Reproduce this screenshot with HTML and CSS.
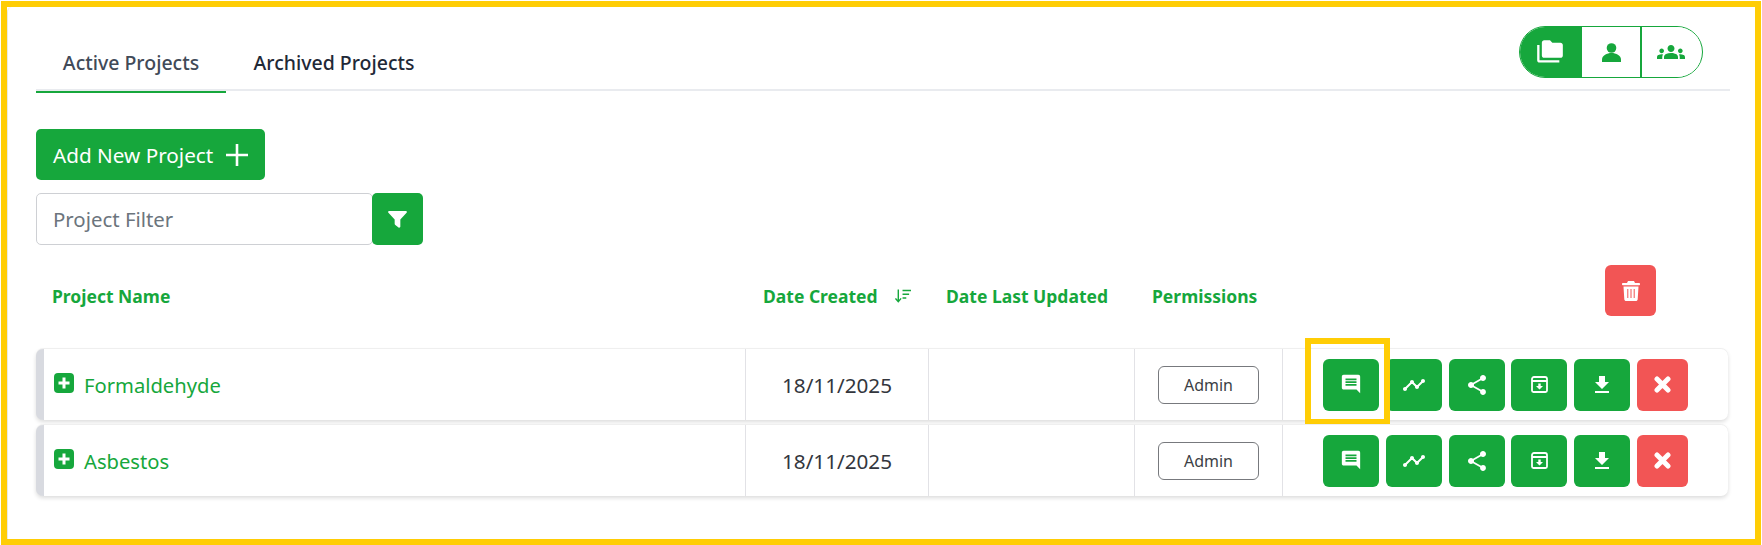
FILE: index.html
```html
<!DOCTYPE html>
<html lang="en">
<head>
<meta charset="utf-8">
<title>Projects</title>
<link rel="stylesheet" href="styles.css">
</head>
<body>
<div class="frame">
  <main class="card">
    <nav class="tabs">
      <a class="tab tab-active">Active Projects</a>
      <a class="tab">Archived Projects</a>
      <div class="toggle">
        <button class="toggle-item toggle-on"><svg class="ic-folder" viewBox="0 0 24 24"><path d="M3 19h17v2H3c-1.1 0-2-.9-2-2V6h2v13zM23 6v9c0 1.1-.9 2-2 2H7c-1.1 0-2-.9-2-2l.01-11C5.01 2.9 5.9 2 7 2h5l2 2h7c1.1 0 2 .9 2 2z"/></svg></button>
        <button class="toggle-item"><svg class="ic-person" viewBox="0 0 19 19"><circle cx="9.500" cy="5" r="4.800"/><path d="M0 19v-2.500C0 12.500 5 10 9.500 10S19 12.500 19 16.500V19z"/></svg></button>
        <button class="toggle-item"><svg class="ic-groups" viewBox="0 0 24 24"><path d="M12 12.750c1.630 0 3.070.39 4.240.9 1.080.48 1.760 1.560 1.760 2.730V18H6v-1.610c0-1.180.68-2.260 1.760-2.730 1.170-.52 2.610-.91 4.240-.91zM4 13c1.100 0 2-.9 2-2s-.9-2-2-2-2 .9-2 2 .9 2 2 2zm1.130 1.100c-.37-.06-.74-.1-1.130-.1-.99 0-1.930.21-2.780.58C.48 14.900 0 15.620 0 16.430V18h4.500v-1.610c0-.83.23-1.610.63-2.290zM20 13c1.100 0 2-.9 2-2s-.9-2-2-2-2 .9-2 2 .9 2 2 2zm4 3.430c0-.81-.48-1.530-1.220-1.850-.85-.37-1.790-.58-2.780-.58-.39 0-.76.04-1.130.1.4.68.63 1.460.63 2.290V18H24v-1.570zM12 6c1.660 0 3 1.340 3 3s-1.340 3-3 3-3-1.340-3-3 1.340-3 3-3z"/></svg></button>
      </div>
    </nav>

    <button class="add-btn">Add New Project<svg class="ic-plus" viewBox="0 0 22 22"><path d="M11 0v22M0 11h22"/></svg></button>

    <div class="filter">
      <input class="filter-input" type="text" placeholder="Project Filter">
      <button class="filter-btn"><svg class="ic-filter" viewBox="0 0 20 18"><path d="M1.200 0h17.600c1 0 1.500 1.200.8 1.900L13 9v7.500c0 1-1.100 1.500-1.900.9l-3.400-2.600c-.4-.3-.7-.7-.7-1.200V9L.4 1.900C-.3 1.200.2 0 1.200 0z"/></svg></button>
    </div>

    <div class="grid head">
      <div class="hcell hname">Project Name</div>
      <div class="hcell">Date Created<svg class="ic-sort" viewBox="0 0 17 14"><path d="M3.500 0v12M.5 9.500l3 3.500 3-3.500M8 1.200h9M8 5.200h7M8 9.200h4"/></svg></div>
      <div class="hcell">Date Last Updated</div>
      <div class="hcell">Permissions</div>
      <div class="hactions">
        <button class="act danger del"><svg class="ic-trash" viewBox="0 0 18 20"><path d="M6 0h6l1 2h4.200c.4 0 .8.400.8.800v.700c0 .4-.4.800-.8.800H.8c-.4 0-.8-.4-.8-.8v-.700c0-.4.400-.8.800-.8H5zM1.500 5.500h15l-.8 12.700c-.1 1-.9 1.800-1.900 1.800H4.200c-1 0-1.800-.8-1.900-1.800z"/><path class="trash-bars" d="M5.800 8v9M9 8v9M12.200 8v9"/></svg></button>
      </div>
    </div>

    <section class="grid row">
      <div class="cell name"><svg class="ic-expand" viewBox="0 0 20 20"><rect width="20" height="20" rx="4"/><path d="M10 4.500v11M4.500 10h11"/></svg><a class="pname">Formaldehyde</a></div>
      <div class="cell center">18/11/2025</div>
      <div class="cell"></div>
      <div class="cell center"><span class="badge">Admin</span></div>
      <div class="cell actions">
        <button class="act"><svg class="i22" viewBox="0 0 24 24"><path d="M21.990 4c0-1.100-.89-2-1.990-2H4c-1.100 0-2 .9-2 2v12c0 1.100.9 2 2 2h14l4 4-.01-18zM18 14H6v-2h12v2zm0-3H6V9h12v2zm0-3H6V6h12v2z"/></svg></button>
        <button class="act"><svg class="i24" viewBox="0 0 24 24"><path d="M23 8c0 1.100-.9 2-2 2-.18 0-.35-.02-.51-.07l-3.560 3.550c.05.16.07.34.07.52 0 1.100-.9 2-2 2s-2-.9-2-2c0-.18.02-.36.07-.52l-2.550-2.550c-.16.05-.34.07-.52.07s-.36-.02-.52-.07l-4.550 4.560c.05.16.07.33.07.51 0 1.100-.9 2-2 2s-2-.9-2-2 .9-2 2-2c.18 0 .35.02.51.07l4.560-4.550C8.020 9.360 8 9.180 8 9c0-1.100.9-2 2-2s2 .9 2 2c0 .18-.02.36-.07.52l2.550 2.550c.16-.05.34-.07.52-.07s.36.02.52.07l3.550-3.560C19.020 8.350 19 8.180 19 8c0-1.100.9-2 2-2s2 .9 2 2z"/></svg></button>
        <button class="act"><svg class="i24" viewBox="0 0 24 24"><path d="M18 16.080c-.76 0-1.440.3-1.960.77L8.910 12.700c.05-.23.09-.46.09-.7s-.04-.47-.09-.7l7.050-4.110c.54.5 1.250.81 2.040.81 1.660 0 3-1.340 3-3s-1.340-3-3-3-3 1.340-3 3c0 .24.04.47.09.7L8.040 9.810C7.500 9.310 6.790 9 6 9c-1.660 0-3 1.340-3 3s1.340 3 3 3c.79 0 1.500-.31 2.040-.81l7.120 4.160c-.05.21-.08.43-.08.65 0 1.610 1.310 2.920 2.920 2.920s2.920-1.310 2.920-2.920-1.310-2.920-2.920-2.920z"/></svg></button>
        <button class="act"><svg class="i17" viewBox="0 0 17 17"><path class="ol" d="M1 5v9.500A1.500 1.500 0 0 0 2.500 16h12a1.500 1.500 0 0 0 1.500-1.500V5M1 5V3A2 2 0 0 1 3 1h11a2 2 0 0 1 2 2v2M1 5h15"/><path d="M7.300 7.500h2.400v2.600h2.300l-3.500 3.400-3.500-3.400h2.300z"/></svg></button>
        <button class="act"><svg class="i24" viewBox="0 0 24 24"><path d="M19 9h-4V3H9v6H5l7 7 7-7zM5 18v2h14v-2H5z"/></svg></button>
        <button class="act danger"><svg class="i17 x" viewBox="0 0 17 17"><path d="M3 3l11 11M14 3L3 14"/></svg></button>
      </div>
      <div class="highlight"></div>
    </section>

    <section class="grid row">
      <div class="cell name"><svg class="ic-expand" viewBox="0 0 20 20"><rect width="20" height="20" rx="4"/><path d="M10 4.500v11M4.500 10h11"/></svg><a class="pname">Asbestos</a></div>
      <div class="cell center">18/11/2025</div>
      <div class="cell"></div>
      <div class="cell center"><span class="badge">Admin</span></div>
      <div class="cell actions">
        <button class="act"><svg class="i22" viewBox="0 0 24 24"><path d="M21.990 4c0-1.100-.89-2-1.990-2H4c-1.100 0-2 .9-2 2v12c0 1.100.9 2 2 2h14l4 4-.01-18zM18 14H6v-2h12v2zm0-3H6V9h12v2zm0-3H6V6h12v2z"/></svg></button>
        <button class="act"><svg class="i24" viewBox="0 0 24 24"><path d="M23 8c0 1.100-.9 2-2 2-.18 0-.35-.02-.51-.07l-3.560 3.550c.05.16.07.34.07.52 0 1.100-.9 2-2 2s-2-.9-2-2c0-.18.02-.36.07-.52l-2.550-2.550c-.16.05-.34.07-.52.07s-.36-.02-.52-.07l-4.550 4.560c.05.16.07.33.07.51 0 1.100-.9 2-2 2s-2-.9-2-2 .9-2 2-2c.18 0 .35.02.51.07l4.560-4.550C8.020 9.360 8 9.180 8 9c0-1.100.9-2 2-2s2 .9 2 2c0 .18-.02.36-.07.52l2.550 2.550c.16-.05.34-.07.52-.07s.36.02.52.07l3.550-3.560C19.020 8.350 19 8.180 19 8c0-1.100.9-2 2-2s2 .9 2 2z"/></svg></button>
        <button class="act"><svg class="i24" viewBox="0 0 24 24"><path d="M18 16.080c-.76 0-1.440.3-1.960.77L8.910 12.700c.05-.23.09-.46.09-.7s-.04-.47-.09-.7l7.050-4.110c.54.5 1.250.81 2.040.81 1.660 0 3-1.340 3-3s-1.340-3-3-3-3 1.340-3 3c0 .24.04.47.09.7L8.040 9.810C7.500 9.310 6.790 9 6 9c-1.660 0-3 1.340-3 3s1.340 3 3 3c.79 0 1.500-.31 2.040-.81l7.120 4.160c-.05.21-.08.43-.08.65 0 1.610 1.310 2.920 2.920 2.920s2.920-1.310 2.920-2.920-1.310-2.920-2.920-2.920z"/></svg></button>
        <button class="act"><svg class="i17" viewBox="0 0 17 17"><path class="ol" d="M1 5v9.500A1.500 1.500 0 0 0 2.500 16h12a1.500 1.500 0 0 0 1.500-1.500V5M1 5V3A2 2 0 0 1 3 1h11a2 2 0 0 1 2 2v2M1 5h15"/><path d="M7.300 7.500h2.400v2.600h2.300l-3.500 3.400-3.500-3.400h2.300z"/></svg></button>
        <button class="act"><svg class="i24" viewBox="0 0 24 24"><path d="M19 9h-4V3H9v6H5l7 7 7-7zM5 18v2h14v-2H5z"/></svg></button>
        <button class="act danger"><svg class="i17 x" viewBox="0 0 17 17"><path d="M3 3l11 11M14 3L3 14"/></svg></button>
      </div>
    </section>
  </main>
</div>
</body>
</html>
```
FILE: styles.css
```css
* { box-sizing: border-box; }
html, body { margin: 0; padding: 0; background: #fff; }
body { padding: 1px 1px 0; font-family: "Noto Sans", "Open Sans", sans-serif; overflow: hidden; }
button { font-family: inherit; border: 0; padding: 0; cursor: pointer; }
svg { display: block; fill: currentColor; }

.frame { height: 544px; border: 6px solid #ffcd05; background: #fff; }
.card { height: 100%; padding: 0 27px 0 28px; border-left: 1px solid #e8e8e8; border-radius: 5px 0 0 0; }

.tabs { display: flex; align-items: flex-end; height: 84px; margin-right: -2px; border-bottom: 2px solid #e9ebef; }
.tab { width: 190px; height: 55px; margin-bottom: -4px; padding-top: 11px; text-align: center; font-size: 19.500px; line-height: 27px; font-weight: 500; color: #1f2937; border-bottom: 2px solid transparent; }
.tab + .tab { width: 216px; }
.tab-active { color: #414a58; border-bottom-color: #16a73c; }

.toggle { display: flex; height: 52px; width: 184px; margin: 0 27px 11px auto; border: 1px solid #16a73c; border-radius: 26px; overflow: hidden; }
.toggle-item { display: flex; align-items: center; justify-content: center; width: 60px; background: #fff; color: #16a73c; }
.toggle-item + .toggle-item { border-left: 2px solid #16a73c; }
.toggle-on { background: #16a73c; color: #fff; }
.ic-folder { width: 28px; height: 28px; }
.ic-person { width: 19px; height: 19px; margin-top: 1px; }
.ic-groups { width: 28px; height: 28px; }

.add-btn { display: flex; align-items: center; width: 229px; height: 51px; margin-top: 38px; padding-left: 17px; border-radius: 5px; background: #16a73c; color: #fff; font-size: 20.700px; }
.ic-plus { width: 22px; height: 22px; margin-left: 13px; fill: none; stroke: #fff; stroke-width: 2.600; }

.filter { display: flex; margin-top: 13px; height: 52px; }
.filter-input { width: 337px; height: 52px; margin-right: -1px; padding: 0 16px; border: 1px solid #ced0d4; border-radius: 5px; font: 20.400px "Noto Sans", sans-serif; color: #333; outline: 0; }
.filter-input::placeholder { color: #6c757d; opacity: 1; }
.filter-btn { display: flex; align-items: center; justify-content: center; position: relative; width: 51px; height: 52px; border-radius: 5px; background: #16a73c; color: #fff; }
.ic-filter { width: 19px; height: 17px; }

.grid { display: grid; grid-template-columns: 709px 183px 206px 148px 446px; }
.head { margin-top: 20px; height: 51px; }
.hcell { display: flex; align-items: center; padding: 11px 0 0 18px; font-size: 17.500px; font-weight: 700; color: #16a73c; white-space: nowrap; }
.hname { padding-left: 16px; }
.ic-sort { width: 16px; height: 14px; margin-left: 17px; fill: none; stroke: #16a73c; stroke-width: 1.500; }
.hactions { display: flex; justify-content: flex-end; padding-right: 72px; }

.act { display: flex; align-items: center; justify-content: center; width: 56px; height: 52px; border-radius: 6px; background: #16a73c; color: #fff; flex: none; }
.danger { background: #f25555; width: 51px; }
.del { height: 51px; }
.ic-trash { width: 18px; height: 20px; }
.trash-bars { fill: none; stroke: #f25555; stroke-width: 1; }

.row { position: relative; height: 71px; margin-top: 5px; background: #fff; border-left: 8px solid #d8dae0; border-radius: 7px; box-shadow: 0 2px 4px rgba(0, 0, 0, .14), 0 -1px 0 #f3f3f3; grid-template-columns: 701px 183px 206px 148px 446px; }
.head + .row { margin-top: 33px; }
.cell { display: flex; align-items: center; font-size: 20.700px; color: #33363d; }
.cell + .cell { border-left: 1px solid #e2e2e6; }
.center { justify-content: center; }
.name { padding-left: 10px; }
.ic-expand { width: 20px; height: 20px; margin: -4px 10px 0 0; fill: #16a73c; stroke: none; }
.ic-expand path { fill: none; stroke: #fff; stroke-width: 3; }
.pname { color: #16a73c; font-size: 20.200px; }
.badge { display: block; width: 101px; height: 38px; margin-top: 1px; border: 1px solid #77797d; border-radius: 6px; text-align: center; font-size: 16px; line-height: 36px; color: #3c3f45; }
.actions { gap: 6.800px; padding-left: 40px; }
.i22 { width: 22px; height: 22px; margin-top: -2px; }
.i24 { width: 24px; height: 24px; }
.i17 { width: 17px; height: 17px; }
.ol { fill: none; stroke: #fff; stroke-width: 1.800; }
.x { fill: none; stroke: #fff; stroke-width: 5; stroke-linecap: round; }
.highlight { position: absolute; left: 1261px; top: -11px; width: 85px; height: 87px; border: 6px solid #ffcd05; pointer-events: none; }
```
